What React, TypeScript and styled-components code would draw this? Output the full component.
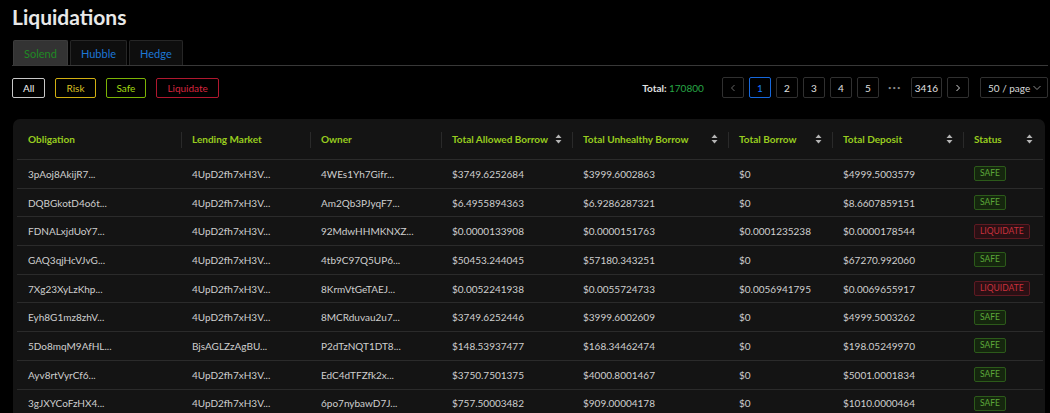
import styled, { createGlobalStyle } from "styled-components";

const GlobalStyle = createGlobalStyle`
  html, body {
    margin: 0;
    padding: 0;
    background: #000;
  }
  body {
    font-family: Lato, "Noto Sans", Arial, sans-serif;
    color: #d0d0d0;
    overflow: hidden;
  }
`;

type Status = "SAFE" | "LIQUIDATE";

interface Row {
  obligation: string;
  market: string;
  owner: string;
  allowed: string;
  unhealthy: string;
  borrow: string;
  deposit: string;
  status: Status;
}

const rows: Row[] = [
  { obligation: "3pAoj8AkijR7...", market: "4UpD2fh7xH3V...", owner: "4WEs1Yh7Gifr...", allowed: "$3749.6252684", unhealthy: "$3999.6002863", borrow: "$0", deposit: "$4999.5003579", status: "SAFE" },
  { obligation: "DQBGkotD4o6t...", market: "4UpD2fh7xH3V...", owner: "Am2Qb3PJyqF7...", allowed: "$6.4955894363", unhealthy: "$6.9286287321", borrow: "$0", deposit: "$8.6607859151", status: "SAFE" },
  { obligation: "FDNALxjdUoY7...", market: "4UpD2fh7xH3V...", owner: "92MdwHHMKNXZ...", allowed: "$0.0000133908", unhealthy: "$0.0000151763", borrow: "$0.0001235238", deposit: "$0.0000178544", status: "LIQUIDATE" },
  { obligation: "GAQ3qjHcVJvG...", market: "4UpD2fh7xH3V...", owner: "4tb9C97Q5UP6...", allowed: "$50453.244045", unhealthy: "$57180.343251", borrow: "$0", deposit: "$67270.992060", status: "SAFE" },
  { obligation: "7Xg23XyLzKhp...", market: "4UpD2fh7xH3V...", owner: "8KrmVtGeTAEJ...", allowed: "$0.0052241938", unhealthy: "$0.0055724733", borrow: "$0.0056941795", deposit: "$0.0069655917", status: "LIQUIDATE" },
  { obligation: "Eyh8G1mz8zhV...", market: "4UpD2fh7xH3V...", owner: "8MCRduvau2u7...", allowed: "$3749.6252446", unhealthy: "$3999.6002609", borrow: "$0", deposit: "$4999.5003262", status: "SAFE" },
  { obligation: "5Do8mqM9AfHL...", market: "BjsAGLZzAgBU...", owner: "P2dTzNQT1DT8...", allowed: "$148.53937477", unhealthy: "$168.34462474", borrow: "$0", deposit: "$198.05249970", status: "SAFE" },
  { obligation: "Ayv8rtVyrCf6...", market: "4UpD2fh7xH3V...", owner: "EdC4dTFZfk2x...", allowed: "$3750.7501375", unhealthy: "$4000.8001467", borrow: "$0", deposit: "$5001.0001834", status: "SAFE" },
  { obligation: "3gJXYCoFzHX4...", market: "4UpD2fh7xH3V...", owner: "6po7nybawD7J...", allowed: "$757.50003482", unhealthy: "$909.00004178", borrow: "$0", deposit: "$1010.0000464", status: "SAFE" },
];

const columns = [
  { title: "Obligation", width: 164, sort: false },
  { title: "Lending Market", width: 129, sort: false },
  { title: "Owner", width: 131, sort: false },
  { title: "Total Allowed Borrow", width: 131, sort: true },
  { title: "Total Unhealthy Borrow", width: 156, sort: true },
  { title: "Total Borrow", width: 104, sort: true },
  { title: "Total Deposit", width: 131, sort: true },
  { title: "Status", width: 80, sort: true },
];

const filters = [
  { label: "All", color: "#c8c8c8", text: "#f0f0f0" },
  { label: "Risk", color: "#d1b012", text: "#dcc024" },
  { label: "Safe", color: "#7cb305", text: "#a0d911" },
  { label: "Liquidate", color: "#b0182f", text: "#d9253f" },
];

function SortIcon() {
  return (
    <svg width="7" height="10" viewBox="0 0 7 10">
      <path d="M3.5 0.5 L6.5 4 H0.5 Z" fill="#b5b5b5" />
      <path d="M3.5 9.5 L6.5 6 H0.5 Z" fill="#b5b5b5" />
    </svg>
  );
}

export default function App() {
  return (
    <>
      <GlobalStyle />
      <Page>
        <Title>Liquidations</Title>
        <Tabs>
          <Tab $active>Solend</Tab>
          <Tab>Hubble</Tab>
          <Tab>Hedge</Tab>
        </Tabs>
        <Toolbar>
          <Filters>
            {filters.map((f) => (
              <FilterButton key={f.label} $border={f.color} $text={f.text}>
                {f.label}
              </FilterButton>
            ))}
          </Filters>
          <Pager>
            <Total>
              Total: <span>170800</span>
            </Total>
            <PageItems>
              <PageBox $muted>
                <svg width="8" height="8" viewBox="0 0 8 8">
                  <path d="M5.5 1 L2.5 4 L5.5 7" stroke="#666" strokeWidth="1" fill="none" />
                </svg>
              </PageBox>
              <PageBox $active>1</PageBox>
              <PageBox>2</PageBox>
              <PageBox>3</PageBox>
              <PageBox>4</PageBox>
              <PageBox>5</PageBox>
              <Dots>•••</Dots>
              <PageBox>3416</PageBox>
              <PageBox>
                <svg width="8" height="8" viewBox="0 0 8 8">
                  <path d="M2.5 1 L5.5 4 L2.5 7" stroke="#d8d8d8" strokeWidth="1" fill="none" />
                </svg>
              </PageBox>
            </PageItems>
            <PageSize>
              <span>50 / page</span>
              <svg width="8" height="6" viewBox="0 0 8 6">
                <path d="M0.5 1 L4 4.5 L7.5 1" stroke="#8a8a8a" strokeWidth="1" fill="none" />
              </svg>
            </PageSize>
          </Pager>
        </Toolbar>
        <Card>
          <Table>
            <colgroup>
              {columns.map((c) => (
                <col key={c.title} style={{ width: c.width }} />
              ))}
            </colgroup>
            <thead>
              <tr>
                {columns.map((c, i) => (
                  <HeadCell key={c.title} $divider={i > 0}>
                    <HeadInner>
                      <span>{c.title}</span>
                      {c.sort && <SortIcon />}
                    </HeadInner>
                  </HeadCell>
                ))}
              </tr>
            </thead>
            <tbody>
              {rows.map((r) => (
                <tr key={r.obligation}>
                  <Cell>{r.obligation}</Cell>
                  <Cell>{r.market}</Cell>
                  <Cell>{r.owner}</Cell>
                  <Cell>{r.allowed}</Cell>
                  <Cell>{r.unhealthy}</Cell>
                  <Cell>{r.borrow}</Cell>
                  <Cell>{r.deposit}</Cell>
                  <Cell>
                    <StatusTag $status={r.status}>{r.status}</StatusTag>
                  </Cell>
                </tr>
              ))}
            </tbody>
          </Table>
        </Card>
      </Page>
    </>
  );
}

const Page = styled.div`
  padding: 0 2px 0 12px;
`;

const Title = styled.h1`
  margin: 0;
  height: 32px;
  line-height: 34px;
  font-size: 21px;
  font-weight: 700;
  color: #e8e8e8;
`;

const Tabs = styled.div`
  margin-top: 8px;
  padding-left: 1px;
  display: flex;
  gap: 2px;
  border-bottom: 1px solid #383838;
`;

const Tab = styled.div<{ $active?: boolean }>`
  height: 25px;
  box-sizing: border-box;
  padding: 0 10px;
  display: flex;
  align-items: center;
  font-size: 11px;
  border: 1px solid ${({ $active }) => ($active ? "#3c3c3c" : "#262626")};
  border-bottom: none;
  border-radius: 2px 2px 0 0;
  background: ${({ $active }) => ($active ? "#333333" : "#0e0e0e")};
  color: ${({ $active }) => ($active ? "#1f8a24" : "#1d77d6")};
`;

const Toolbar = styled.div`
  margin-top: 11px;
  display: flex;
  align-items: center;
  justify-content: space-between;
`;

const Filters = styled.div`
  display: flex;
  gap: 10px;
`;

const FilterButton = styled.div<{ $border: string; $text: string }>`
  height: 20px;
  box-sizing: border-box;
  padding: 0 10px;
  display: flex;
  align-items: center;
  font-size: 10px;
  border: 1px solid ${({ $border }) => $border};
  border-radius: 2px;
  color: ${({ $text }) => $text};
`;

const Pager = styled.div`
  display: flex;
  align-items: center;
`;

const Total = styled.div`
  font-size: 10px;
  font-weight: 700;
  color: #e0e0e0;
  margin-right: 18px;

  span {
    font-weight: 400;
    color: #27a745;
  }
`;

const PageItems = styled.div`
  display: flex;
  align-items: center;
  gap: 5px;
`;

const PageBox = styled.div<{ $active?: boolean; $muted?: boolean }>`
  min-width: 22px;
  height: 21px;
  padding: 0 3px;
  box-sizing: border-box;
  display: flex;
  align-items: center;
  justify-content: center;
  font-size: 10px;
  border: 1px solid ${({ $active }) => ($active ? "#1668dc" : "#303030")};
  border-radius: 2px;
  color: ${({ $active }) => ($active ? "#1677ff" : "#e0e0e0")};
  background: #000;
`;

const Dots = styled.div`
  width: 22px;
  text-align: center;
  font-size: 6px;
  letter-spacing: 1px;
  color: #8a8a8a;
`;

const PageSize = styled.div`
  margin-left: 11px;
  width: 68px;
  height: 21px;
  box-sizing: border-box;
  padding: 0 6px 0 7px;
  display: flex;
  align-items: center;
  justify-content: space-between;
  font-size: 10px;
  color: #d8d8d8;
  border: 1px solid #303030;
  border-radius: 2px;
`;

const Card = styled.div`
  margin: 21px 3px 0 1px;
  padding: 0 2px 0 4px;
  background: #141414;
  border-radius: 7px;
  height: 320px;
`;

const Table = styled.table`
  width: 100%;
  table-layout: fixed;
  border-collapse: collapse;
`;

const HeadCell = styled.th<{ $divider?: boolean }>`
  position: relative;
  height: 40px;
  padding: 0 10px 0 11px;
  text-align: left;
  font-size: 10px;
  font-weight: 700;
  color: #98cc1f;
  border-bottom: 1px solid #2b2b2b;

  &::before {
    content: "";
    display: ${({ $divider }) => ($divider ? "block" : "none")};
    position: absolute;
    left: 0;
    top: 13px;
    height: 16px;
    width: 1px;
    background: #2a2a2a;
  }
`;

const HeadInner = styled.div`
  display: flex;
  align-items: center;
  justify-content: space-between;
  white-space: nowrap;
`;

const Cell = styled.td`
  height: 27.7px;
  padding: 0 10px 0 11px;
  font-size: 10px;
  color: #cfcfcf;
  border-bottom: 1px solid #2b2b2b;
  white-space: nowrap;
`;

const StatusTag = styled.span<{ $status: Status }>`
  display: inline-block;
  padding: 1px 5px;
  font-size: 8.5px;
  line-height: 11px;
  border-radius: 2px;
  border: 1px solid ${({ $status }) => ($status === "SAFE" ? "#2c5a1a" : "#5e1a22")};
  background: ${({ $status }) => ($status === "SAFE" ? "#15260e" : "#2a1014")};
  color: ${({ $status }) => ($status === "SAFE" ? "#5da83a" : "#c9303d")};
`;
